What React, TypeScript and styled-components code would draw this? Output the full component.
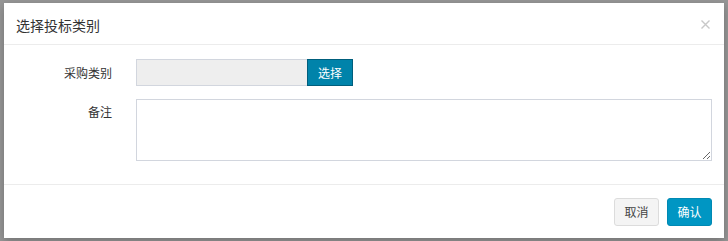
import styled, { createGlobalStyle } from 'styled-components';

const GlobalStyle = createGlobalStyle`
  html, body {
    margin: 0;
    padding: 0;
    background: #979797;
  }
  body {
    font-family: "Noto Sans CJK SC", "Microsoft YaHei", "Liberation Sans", sans-serif;
    font-size: 12px;
    color: #333;
  }
  * {
    box-sizing: border-box;
  }
`;

function CloseIcon() {
  return (
    <svg width="9" height="9" viewBox="0 0 9 9" aria-hidden="true">
      <path d="M0.5 0.5 L8.5 8.5 M8.5 0.5 L0.5 8.5" stroke="#c8c8c8" strokeWidth="1.4" fill="none" />
    </svg>
  );
}

function App() {
  return (
    <>
      <GlobalStyle />
      <Backdrop>
        <Modal>
          <Header>
            <Title>选择投标类别</Title>
            <Close type="button" aria-label="关闭">
              <CloseIcon />
            </Close>
          </Header>
          <Body>
            <Row>
              <Label>采购类别</Label>
              <InputGroup>
                <ReadOnlyInput readOnly />
                <PickButton type="button">选择</PickButton>
              </InputGroup>
            </Row>
            <Row $top>
              <Label $top>备注</Label>
              <Remark />
            </Row>
          </Body>
          <Footer>
            <Button type="button">取消</Button>
            <Button type="button" $primary>
              确认
            </Button>
          </Footer>
        </Modal>
      </Backdrop>
    </>
  );
}

const Backdrop = styled.div`
  padding: 3px 4px;
  min-height: 241px;
`;

const Modal = styled.div`
  width: 720px;
  background: #fff;
  box-shadow: 0 3px 9px rgba(0, 0, 0, 0.25);
`;

const Header = styled.div`
  display: flex;
  justify-content: space-between;
  align-items: center;
  height: 42px;
  padding: 3px 14px 0 12px;
  border-bottom: 1px solid #ececec;
`;

const Title = styled.h4`
  margin: 0;
  font-size: 14px;
  font-weight: normal;
  line-height: 20px;
  color: #333;
`;

const Close = styled.button`
  display: flex;
  padding: 0;
  margin-top: -2px;
  border: none;
  background: none;
  cursor: pointer;
`;

const Body = styled.div`
  display: flex;
  flex-direction: column;
  gap: 13px;
  padding: 14px 12px 23px;
`;

const Row = styled.div<{ $top?: boolean }>`
  display: grid;
  grid-template-columns: 96px 1fr;
  column-gap: 24px;
  align-items: ${(p) => (p.$top ? 'start' : 'center')};
`;

const Label = styled.label<{ $top?: boolean }>`
  text-align: right;
  line-height: 17px;
  padding-top: ${(p) => (p.$top ? '4px' : '0')};
  color: #333;
`;

const InputGroup = styled.div`
  display: flex;
`;

const ReadOnlyInput = styled.input`
  width: 171px;
  height: 27px;
  margin: 0;
  padding: 4px 8px;
  border: 1px solid #d2d6de;
  border-right: none;
  background: #eee;
  outline: none;
  font: inherit;
`;

const PickButton = styled.button`
  width: 46px;
  height: 27px;
  margin: 0;
  padding: 0;
  border: 1px solid #005e7c;
  background: #0083aa;
  color: #fff;
  font: inherit;
  line-height: 25px;
  cursor: pointer;
`;

const Remark = styled.textarea`
  display: block;
  width: 100%;
  height: 62px;
  margin: 0;
  padding: 6px 8px;
  border: 1px solid #d2d6de;
  background: #fff;
  font: inherit;
  outline: none;
`;

const Footer = styled.div`
  display: flex;
  justify-content: flex-end;
  gap: 8px;
  padding: 13px 12px 12px;
  border-top: 1px solid #ececec;
`;

const Button = styled.button<{ $primary?: boolean }>`
  width: 45px;
  height: 28px;
  padding: 0;
  border-radius: 3px;
  border: 1px solid ${(p) => (p.$primary ? '#0089b3' : '#dcdcdc')};
  background: ${(p) => (p.$primary ? '#0096c3' : '#f4f4f4')};
  color: ${(p) => (p.$primary ? '#fff' : '#444')};
  font: inherit;
  line-height: 26px;
  cursor: pointer;
`;

export default App;
